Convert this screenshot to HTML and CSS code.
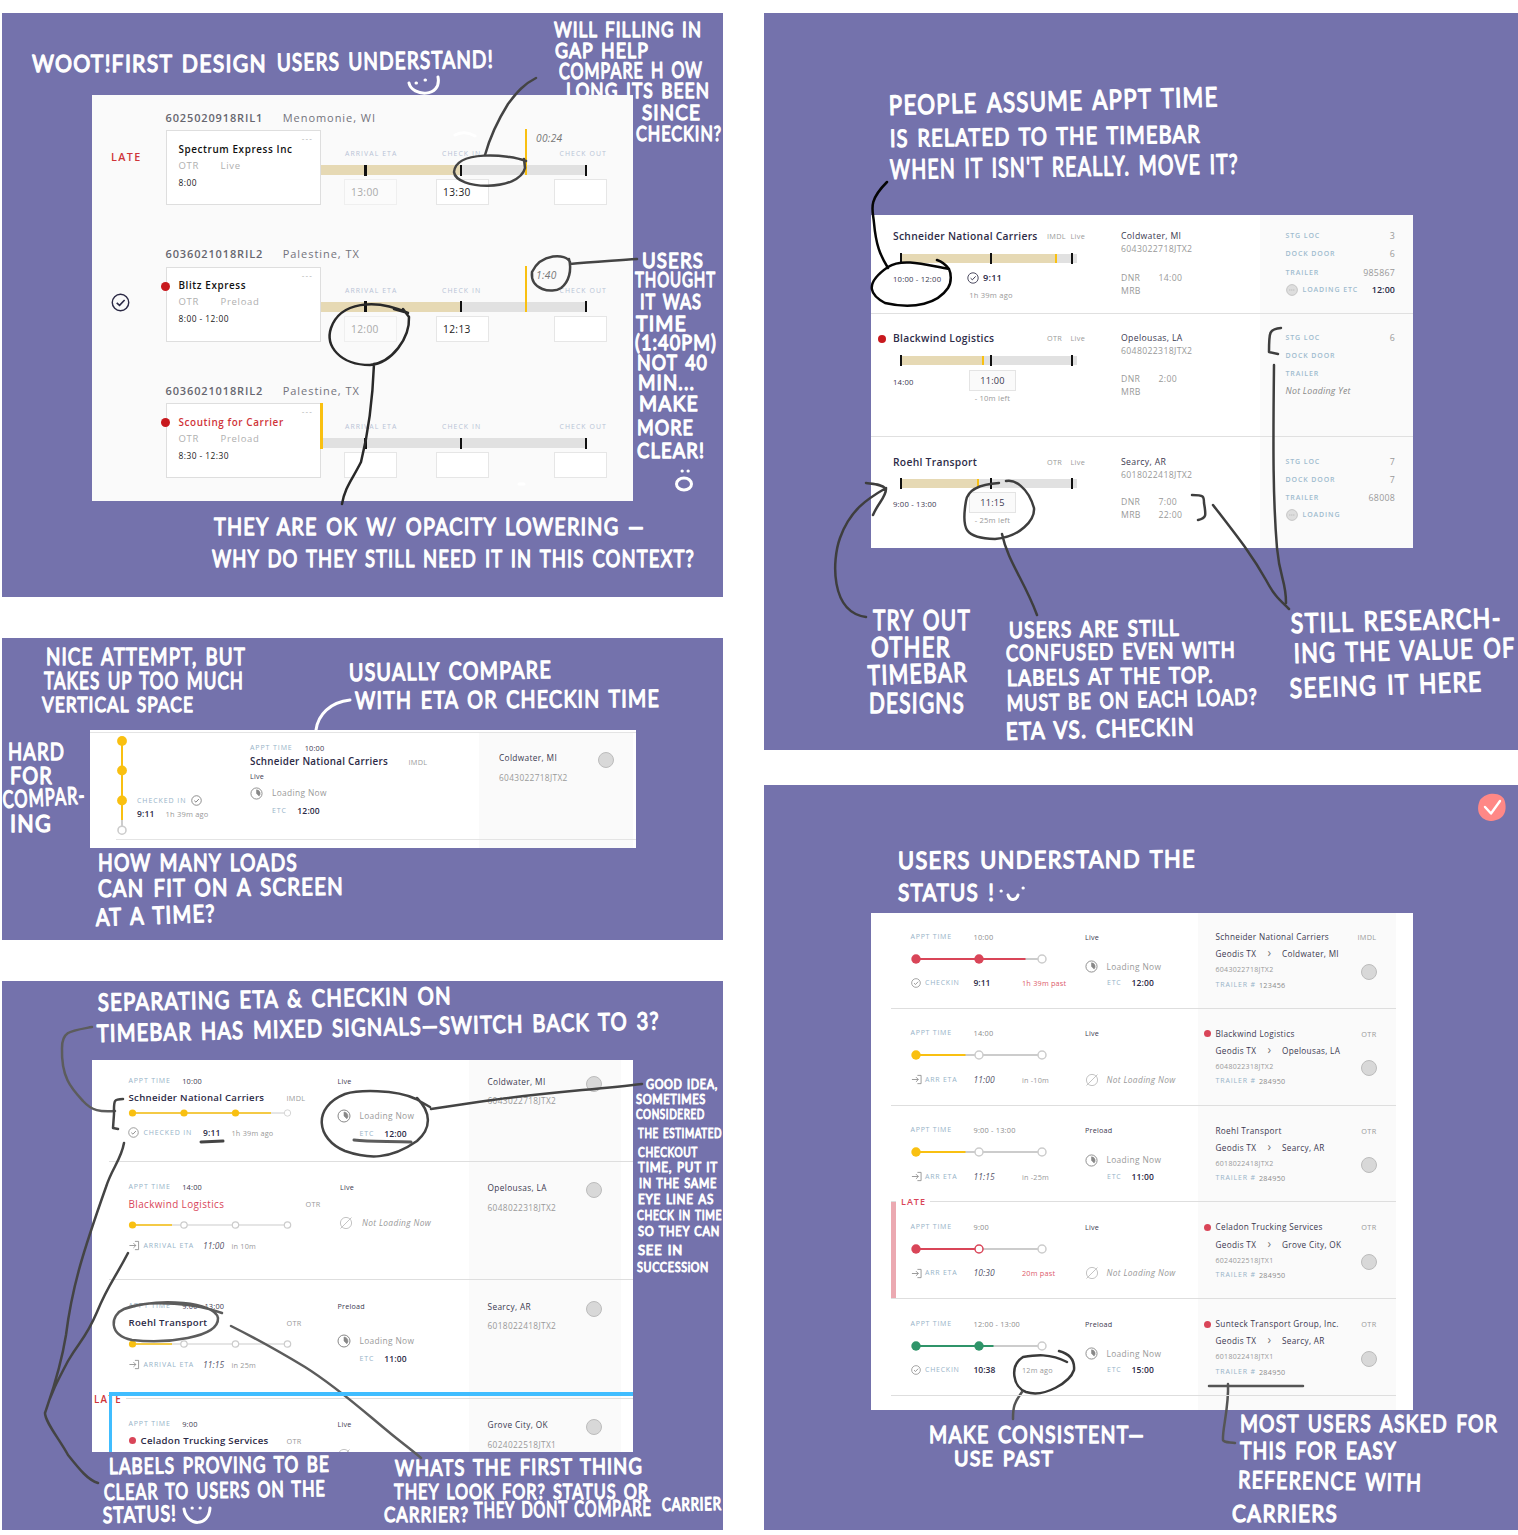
FILE: index.html
```html
<!DOCTYPE html>
<html lang="en">
<head>
<meta charset="utf-8">
<title>Load timeline iterations</title>
<link rel="stylesheet" href="styles.css">
</head>
<body>
<svg class="defs" width="0" height="0">
  <symbol id="check" viewBox="0 0 12 12"><circle cx="6" cy="6" r="5.2" fill="none" stroke="currentColor" stroke-width=".9"/><path d="M3.6 6.2 5.4 7.8 8.6 4.4" fill="none" stroke="currentColor" stroke-width="1"/></symbol>
  <symbol id="arrive" viewBox="0 0 12 12"><path d="M1 6H8M5.4 3.4 8 6 5.4 8.6M7 1.5H11V10.5H7" fill="none" stroke="currentColor" stroke-width=".9"/></symbol>
  <symbol id="pie" viewBox="0 0 14 14"><circle cx="7" cy="7" r="6" fill="none" stroke="#888" stroke-width="1"/><path d="M7 3V7L9.8 9.8A4 4 0 0 0 7 3Z" fill="#888" stroke="#888" stroke-width=".6"/></symbol>
  <symbol id="none" viewBox="0 0 14 14"><circle cx="7" cy="7" r="5.6" fill="none" stroke="#c4c4c4" stroke-width="1"/><path d="M1.5 12.5 12.5 1.5" stroke="#c4c4c4" stroke-width="1"/></symbol>
  <symbol id="dots" viewBox="0 0 12 12"><circle cx="6" cy="6" r="5.4" fill="#dedede" stroke="#bdbdbd" stroke-width=".8"/><path d="M3.2 6H8.8" stroke="#bbb" stroke-width="1" stroke-dasharray="1.2 .8"/></symbol>
</svg>
<main class="board">
<div class="col col-left">

<section class="panel p1">
  <svg class="ink" viewBox="2 13 721 584"><text class="h m" x="566" y="98" textLength="144" lengthAdjust="spacingAndGlyphs">LONG ITS BEEN</text></svg>
  <div class="card">
    <div class="load">
      <div class="flag late">LATE</div>
      <div class="body">
        <div class="head"><b>6025020918RIL1</b><span>Menomonie, WI</span></div>
        <div class="main">
          <div class="box"><i class="more">---</i><h3>Spectrum Express Inc</h3><p><span>OTR</span><span>Live</span></p><time>8:00</time></div>
          <div class="tl">
            <div class="stages names"><span>ARRIVAL ETA</span><span>CHECK IN</span><span>CHECK OUT</span></div>
            <div class="bar"><i class="fill"></i><i class="tick t1"></i><i class="tick t2"></i><i class="tick t3"></i></div>
            <div class="stages fields"><span class="dim">13:00</span><span>13:30</span><span></span></div>
            <i class="now"></i><em class="clock">00:24</em>
          </div>
        </div>
      </div>
    </div>
    <div class="load">
      <div class="flag"><svg width="19" height="19"><use href="#check"/></svg></div>
      <div class="body">
        <div class="head"><b>6036021018RIL2</b><span>Palestine, TX</span></div>
        <div class="main">
          <div class="box"><i class="dot"></i><i class="more">---</i><h3>Blitz Express</h3><p><span>OTR</span><span>Preload</span></p><time>8:00 - 12:00</time></div>
          <div class="tl">
            <div class="stages names"><span>ARRIVAL ETA</span><span>CHECK IN</span><span>CHECK OUT</span></div>
            <div class="bar"><i class="fill"></i><i class="tick t1"></i><i class="tick t2"></i><i class="tick t3"></i></div>
            <div class="stages fields"><span class="dim">12:00</span><span>12:13</span><span></span></div>
            <i class="now"></i><em class="clock">1:40</em>
          </div>
        </div>
      </div>
    </div>
    <div class="load">
      <div class="flag"></div>
      <div class="body">
        <div class="head"><b>6036021018RIL2</b><span>Palestine, TX</span></div>
        <div class="main">
          <div class="box"><i class="dot"></i><i class="more">---</i><h3 class="red">Scouting for Carrier</h3><p><span>OTR</span><span>Preload</span></p><time>8:30 - 12:30</time></div>
          <div class="tl">
            <div class="stages names"><span>ARRIVAL ETA</span><span>CHECK IN</span><span>CHECK OUT</span></div>
            <div class="bar"><i class="tick t1"></i><i class="tick t2"></i><i class="tick t3"></i></div>
            <div class="stages fields"><span></span><span></span><span></span></div>
            <i class="now start"></i>
          </div>
        </div>
      </div>
    </div>
  </div>
  <svg class="ink" viewBox="2 13 721 584">
    <text class="h" x="32" y="72" textLength="235" lengthAdjust="spacingAndGlyphs">WOOT!FIRST DESIGN</text>
    <text class="h" x="277" y="71" textLength="217" lengthAdjust="spacingAndGlyphs" transform="rotate(-.9 277 71)">USERS UNDERSTAND!</text>
    <text class="h m" x="554" y="37" textLength="148" lengthAdjust="spacingAndGlyphs">WILL FILLING IN</text>
    <text class="h m" x="555" y="58" textLength="94" lengthAdjust="spacingAndGlyphs">GAP HELP</text>
    <text class="h m" x="559" y="79" textLength="144" lengthAdjust="spacingAndGlyphs" transform="rotate(-.6 559 79)">COMPARE H OW</text>
    <text class="h m" x="642" y="120" textLength="59" lengthAdjust="spacingAndGlyphs">SINCE</text>
    <text class="h m" x="636" y="141" textLength="86" lengthAdjust="spacingAndGlyphs">CHECKIN?</text>
    <text class="h m" x="642" y="268" textLength="62" lengthAdjust="spacingAndGlyphs">USERS</text>
    <text class="h m" x="635" y="287" textLength="81" lengthAdjust="spacingAndGlyphs">THOUGHT</text>
    <text class="h m" x="640" y="309" textLength="62" lengthAdjust="spacingAndGlyphs">IT WAS</text>
    <text class="h m" x="636" y="331" textLength="51" lengthAdjust="spacingAndGlyphs">TIME</text>
    <text class="h m" x="635" y="350" textLength="82" lengthAdjust="spacingAndGlyphs">(1:40PM)</text>
    <text class="h m" x="637" y="370" textLength="71" lengthAdjust="spacingAndGlyphs">NOT 40</text>
    <text class="h m" x="638" y="390" textLength="57" lengthAdjust="spacingAndGlyphs">MIN...</text>
    <text class="h m" x="639" y="411" textLength="60" lengthAdjust="spacingAndGlyphs">MAKE</text>
    <text class="h m" x="637" y="435" textLength="57" lengthAdjust="spacingAndGlyphs">MORE</text>
    <text class="h m" x="637" y="458" textLength="68" lengthAdjust="spacingAndGlyphs">CLEAR!</text>
    <text class="h" x="214" y="535" textLength="431" lengthAdjust="spacingAndGlyphs">THEY ARE OK W/ OPACITY LOWERING —</text>
    <text class="h" x="212" y="567" textLength="483" lengthAdjust="spacingAndGlyphs">WHY DO THEY STILL NEED IT IN THIS CONTEXT?</text>
    <g class="w"><path d="M409 83C412 97 442 98 438 77M416 83h.5M425 80h.5M682 471h.3M688 471h.3"/><ellipse cx="684" cy="484" rx="7.5" ry="6"/><path d="M455 135Q465 130 475 136M519 484h5"/></g>
    <g class="k"><path d="M536 78C524 84 517 92 508 104C498 120 490 137 485 155"/><path d="M526 161C508 154 456 150 454 172C456 190 519 192 525 168L524 159"/><path d="M570 262C566 253 541 253 532 272C530 290 552 294 561 288C569 282 572 270 569 259M570 264C590 262 610 261 637 259"/></g>
    <g class="k" style="--ink:#292929"><path d="M394 309L408 313C375 298 340 302 331 328C325 346 340 365 370 365C392 363 410 338 409 317L403 309M374 364C373 390 369 430 361 462C352 480 345 487 342 504"/></g>
  </svg>
</section>

<section class="panel p2">
  <div class="card">
    <div class="steps"><svg width="12" height="106"><path d="M6 9V88" stroke="#f9c011" stroke-width="2"/><path d="M6 88V94" stroke="#ccc" stroke-width="2"/><g fill="#f9c011"><circle cx="6" cy="9" r="4.9"/><circle cx="6" cy="38.500" r="4.900"/><circle cx="6" cy="68.500" r="4.900"/></g><circle cx="6" cy="98.200" r="4" fill="#fff" stroke="#ccc" stroke-width="1.600"/></svg></div>
    <div class="checked"><p><span class="lbl">CHECKED IN</span><svg width="11" height="11"><use href="#check"/></svg></p><p><b>9:11</b><small>1h 39m ago</small></p></div>
    <div class="info">
      <p class="c2"><span class="lbl">APPT TIME</span><span class="tm">10:00</span></p>
      <p class="ttl"><b>Schneider National Carriers</b><small>IMDL</small></p>
      <p class="kind">Live</p>
      <p class="ld"><svg width="13" height="13"><use href="#pie"/></svg><span>Loading Now</span></p>
      <p class="etc"><span class="lbl">ETC</span><b>12:00</b></p>
    </div>
    <div class="side"><div><p>Coldwater, MI</p><p class="id">6043022718JTX2</p></div><i class="disc"></i></div>
  </div>
  <svg class="ink" viewBox="2 638 721 302">
    <text class="h" x="46" y="665" textLength="200" lengthAdjust="spacingAndGlyphs">NICE ATTEMPT, BUT</text>
    <text class="h" x="44" y="689" textLength="200" lengthAdjust="spacingAndGlyphs">TAKES UP TOO MUCH</text>
    <text class="h m" x="42" y="712" textLength="152" lengthAdjust="spacingAndGlyphs">VERTICAL SPACE</text>
    <text class="h" x="8" y="760" textLength="57" lengthAdjust="spacingAndGlyphs">HARD</text>
    <text class="h" x="10" y="784" textLength="43" lengthAdjust="spacingAndGlyphs">FOR</text>
    <text class="h" x="3" y="808" textLength="83" lengthAdjust="spacingAndGlyphs" transform="rotate(-3 3 808)">COMPAR-</text>
    <text class="h" x="10" y="832" textLength="42" lengthAdjust="spacingAndGlyphs">ING</text>
    <text class="h" x="98" y="871" textLength="200" lengthAdjust="spacingAndGlyphs">HOW MANY LOADS</text>
    <text class="h" x="98" y="897" textLength="246" lengthAdjust="spacingAndGlyphs" transform="rotate(-.5 98 897)">CAN FIT ON A SCREEN</text>
    <text class="h" x="96" y="926" textLength="120" lengthAdjust="spacingAndGlyphs" transform="rotate(-2 96 926)">AT A TIME?</text>
    <text class="h" x="349" y="681" textLength="203" lengthAdjust="spacingAndGlyphs" transform="rotate(-.8 349 681)">USUALLY COMPARE</text>
    <text class="h" x="355" y="709" textLength="305" lengthAdjust="spacingAndGlyphs" transform="rotate(-.4 355 709)">WITH ETA OR CHECKIN TIME</text>
    <path class="w" d="M350 700C330 702 318 715 316 730"/>
  </svg>
</section>

<section class="panel p3">
  <div class="card">
    <div class="row tight">
      <div class="c-main">
        <p class="ap"><span class="lbl">APPT TIME</span><span class="tm">10:00</span></p>
        <p class="ttl"><b>Schneider National Carriers</b><small>IMDL</small></p>
        <svg class="line" width="170" height="10"><path d="M5 5H160" stroke="#ccc"/><path d="M5 5H143" stroke="#f9c011" stroke-width="1.6"/><g fill="#f9c011"><circle cx="4.5" cy="5" r="3.6"/><circle cx="56" cy="5" r="3.6"/><circle cx="107.5" cy="5" r="3.6"/></g><circle cx="159.500" cy="5" r="3.2" fill="#fff" stroke="#d6d6d6"/></svg>
        <p class="st"><svg width="11" height="11"><use href="#check"/></svg><span class="lbl">CHECKED IN</span><b>9:11</b><small>1h 39m ago</small></p>
      </div>
      <div class="c-load"><p class="kind">Live</p><p class="ld"><svg width="14" height="14"><use href="#pie"/></svg><span>Loading Now</span></p><p class="etc"><span class="lbl">ETC</span><b>12:00</b></p></div>
      <div class="side"><div><p>Coldwater, MI</p><p class="id">6043022718JTX2</p></div><i class="disc"></i></div>
    </div>
    <div class="row second">
      <div class="c-main">
        <p class="ap"><span class="lbl">APPT TIME</span><span class="tm">14:00</span></p>
        <p class="ttl far"><b class="pink">Blackwind Logistics</b><small>OTR</small></p>
        <svg class="line" width="170" height="10"><path d="M5 5H160" stroke="#ccc" stroke-width="1.2"/><path d="M5 5H44" stroke="#f9c011" stroke-width="1.4"/><circle cx="4.500" cy="5" r="3.600" fill="#f9c011"/><g fill="#fff" stroke="#ccc" stroke-width="1.2"><circle cx="56" cy="5" r="3.2"/><circle cx="107.500" cy="5" r="3.2"/><circle cx="159.500" cy="5" r="3.2"/></g></svg>
        <p class="st"><svg width="12" height="11"><use href="#arrive"/></svg><span class="lbl">ARRIVAL ETA</span><em>11:00</em><small>in 10m</small></p>
      </div>
      <div class="c-load shift"><p class="kind">Live</p><p class="ld no"><svg width="14" height="14"><use href="#none"/></svg><em>Not Loading Now</em></p></div>
      <div class="side"><div><p>Opelousas, LA</p><p class="id">6048022318JTX2</p></div><i class="disc"></i></div>
    </div>
    <div class="row">
      <div class="c-main">
        <p class="ap"><span class="lbl">APPT TIME</span><span class="tm">9:00 - 13:00</span></p>
        <p class="ttl"><b>Roehl Transport</b><small>OTR</small></p>
        <svg class="line" width="170" height="10"><path d="M5 5H160" stroke="#ccc" stroke-width="1.2"/><path d="M5 5H44" stroke="#f9c011" stroke-width="1.4"/><circle cx="4.500" cy="5" r="3.600" fill="#f9c011"/><g fill="#fff" stroke="#ccc" stroke-width="1.2"><circle cx="56" cy="5" r="3.2"/><circle cx="107.500" cy="5" r="3.2"/><circle cx="159.500" cy="5" r="3.2"/></g></svg>
        <p class="st"><svg width="12" height="11"><use href="#arrive"/></svg><span class="lbl">ARRIVAL ETA</span><em>11:15</em><small>in 25m</small></p>
      </div>
      <div class="c-load"><p class="kind">Preload</p><p class="ld"><svg width="14" height="14"><use href="#pie"/></svg><span>Loading Now</span></p><p class="etc"><span class="lbl">ETC</span><b>11:00</b></p></div>
      <div class="side"><div><p>Searcy, AR</p><p class="id">6018022418JTX2</p></div><i class="disc"></i></div>
    </div>
    <div class="row last">
      <span class="late">LATE</span>
      <div class="c-main">
        <p class="ap"><span class="lbl">APPT TIME</span><span class="tm">9:00</span></p>
        <p class="ttl"><b class="dotted">Celadon Trucking Services</b><small>OTR</small></p>
      </div>
      <div class="c-load"><p class="kind">Live</p><p class="ld no low"><svg width="14" height="14"><use href="#none"/></svg></p></div>
      <div class="side"><div><p>Grove City, OK</p><p class="id">6024022518JTX1</p></div><i class="disc"></i></div>
      <i class="frame"></i>
    </div>
  </div>
  <svg class="ink" viewBox="2 981 721 549">
    <text class="h" x="98" y="1011" textLength="354" lengthAdjust="spacingAndGlyphs" transform="rotate(-1.1 98 1011)">SEPARATING ETA &amp; CHECKIN ON</text>
    <text class="h" x="97" y="1042" textLength="563" lengthAdjust="spacingAndGlyphs" transform="rotate(-1.3 97 1042)">TIMEBAR HAS MIXED SIGNALS—SWITCH BACK TO 3?</text>
    <g class="h s"><text x="646" y="1089" textLength="72" lengthAdjust="spacingAndGlyphs">GOOD IDEA,</text>
    <text x="636" y="1104" textLength="70" lengthAdjust="spacingAndGlyphs">SOMETIMES</text>
    <text x="636" y="1119" textLength="69" lengthAdjust="spacingAndGlyphs">CONSIDERED</text>
    <text x="638" y="1138" textLength="84" lengthAdjust="spacingAndGlyphs">THE ESTIMATED</text>
    <text x="638" y="1157" textLength="60" lengthAdjust="spacingAndGlyphs">CHECKOUT</text>
    <text x="638" y="1172" textLength="80" lengthAdjust="spacingAndGlyphs">TIME, PUT IT</text>
    <text x="639" y="1188" textLength="78" lengthAdjust="spacingAndGlyphs">IN THE SAME</text>
    <text x="638" y="1204" textLength="76" lengthAdjust="spacingAndGlyphs">EYE LINE AS</text>
    <text x="637" y="1220" textLength="85" lengthAdjust="spacingAndGlyphs">CHECK IN TIME</text>
    <text x="638" y="1236" textLength="82" lengthAdjust="spacingAndGlyphs">SO THEY CAN</text>
    <text x="638" y="1255" textLength="45" lengthAdjust="spacingAndGlyphs">SEE IN</text>
    <text x="637" y="1272" textLength="72" lengthAdjust="spacingAndGlyphs">SUCCESSiON</text></g>
    <text class="h m" x="109" y="1474" textLength="221" lengthAdjust="spacingAndGlyphs" transform="rotate(-.6 109 1474)">LABELS PROVING TO BE</text>
    <text class="h m" x="104" y="1500" textLength="222" lengthAdjust="spacingAndGlyphs" transform="rotate(-1 104 1500)">CLEAR TO USERS ON THE</text>
    <text class="h m" x="103" y="1523" textLength="74" lengthAdjust="spacingAndGlyphs" transform="rotate(-1.500 103 1523)">STATUS!</text>
    <text class="h m" x="395" y="1476" textLength="248" lengthAdjust="spacingAndGlyphs" transform="rotate(-.5 395 1476)">WHATS THE FIRST THING</text>
    <text class="h m" x="394" y="1499" textLength="255" lengthAdjust="spacingAndGlyphs">THEY LOOK FOR? STATUS OR</text>
    <text class="h m" x="384" y="1522" textLength="85" lengthAdjust="spacingAndGlyphs">CARRIER?</text>
    <text class="h m" x="474" y="1518" textLength="178" lengthAdjust="spacingAndGlyphs" transform="rotate(-.8 474 1518)">THEY DONT COMPARE</text>
    <text class="h c" x="662" y="1511" textLength="60" lengthAdjust="spacingAndGlyphs" transform="rotate(-1 662 1511)">CARRIER</text>
    <g class="w"><path d="M184 1509C187 1527 209 1527 210 1508M192 1508h.3M200 1508h.3"/></g>
    <g class="k" style="--ink:#5c5c5c"><path d="M92 1027C70 1031 62 1031 62 1048C61 1078 72 1089 83 1101C92 1111 100 1112 115 1111"/><path d="M124 1309C160 1297 215 1302 218 1318C219 1338 165 1344 132 1340C108 1335 110 1315 124 1309C150 1298 200 1305 222 1313"/><path d="M231 1326C255 1338 285 1355 305 1367C340 1389 370 1417 390 1433C402 1443 412 1450 421 1458"/><path class="thick" d="M354 1140C370 1142 390 1141 411 1142"/></g>
    <g class="k"><path d="M123 1099C113 1099 114 1101 114 1114L113 1128L118 1129M124 1143C121 1160 112 1168 106 1187C83 1252 72 1287 66 1335C60 1372 50 1398 45 1413M128 1253C114 1280 108 1285 97 1312C85 1340 80 1340 68 1361C58 1380 50 1395 45 1413C45 1422 60 1440 68 1455C80 1470 88 1480 98 1483"/><path d="M430 1107L416 1099C395 1089 358 1090 345 1094C312 1107 316 1139 345 1151C368 1159 390 1160 417 1141C432 1128 431 1112 417 1098M431 1109L478 1102C530 1094 590 1090 642 1084"/><path class="thick" d="M201 1142L223 1141"/></g>
  </svg>
</section>
</div>

<div class="col col-right">
<section class="panel p4">
  <div class="card">
    <div class="row r1">
      <div class="c-main">
        <p class="ttl"><b>Schneider National Carriers</b><small>IMDL</small><small>Live</small></p>
        <div class="bar"><i class="fill" style="width:156px"></i><i class="tick t1"></i><i class="tick t2"></i><i class="tick t3"></i><i class="now" style="left:155px"></i></div>
        <div class="times"><span>10:00 - 12:00</span><div class="eta"><p><svg width="12" height="12"><use href="#check"/></svg><b>9:11</b></p><small>1h 39m ago</small></div></div>
      </div>
      <div class="place"><p>Coldwater, MI</p><p class="id">6043022718JTX2</p><p class="pair up"><span>DNR</span><span>14:00</span></p><p class="pair"><span>MRB</span></p></div>
      <div class="dock"><p><span>STG LOC</span><i>3</i></p><p><span>DOCK DOOR</span><i>6</i></p><p><span>TRAILER</span><i>985867</i></p><p class="go"><svg width="12" height="12"><use href="#dots"/></svg><span>LOADING ETC</span><b>12:00</b></p></div>
    </div>
    <div class="row r2">
      <i class="dot"></i>
      <div class="c-main">
        <p class="ttl"><b>Blackwind Logistics</b><small>OTR</small><small>Live</small></p>
        <div class="bar"><i class="fill" style="width:83px"></i><i class="tick t1"></i><i class="tick t2"></i><i class="tick t3"></i><i class="now" style="left:82px"></i></div>
        <div class="times"><span>14:00</span><div class="eta"><span class="field">11:00</span><small>- 10m left</small></div></div>
      </div>
      <div class="place"><p>Opelousas, LA</p><p class="id">6048022318JTX2</p><p class="pair up"><span>DNR</span><span>2:00</span></p><p class="pair"><span>MRB</span></p></div>
      <div class="dock"><p><span>STG LOC</span><i>6</i></p><p><span>DOCK DOOR</span></p><p><span>TRAILER</span></p><p class="go"><em>Not Loading Yet</em></p></div>
    </div>
    <div class="row r3">
      <div class="c-main">
        <p class="ttl"><b>Roehl Transport</b><small>OTR</small><small>Live</small></p>
        <div class="bar"><i class="fill" style="width:78px"></i><i class="tick t1"></i><i class="tick t2"></i><i class="tick t3"></i><i class="now" style="left:77px"></i></div>
        <div class="times"><span>9:00 - 13:00</span><div class="eta"><span class="field">11:15</span><small>- 25m left</small></div></div>
      </div>
      <div class="place"><p>Searcy, AR</p><p class="id">6018022418JTX2</p><p class="pair up"><span>DNR</span><span>7:00</span></p><p class="pair"><span>MRB</span><span>22:00</span></p></div>
      <div class="dock"><p><span>STG LOC</span><i>7</i></p><p><span>DOCK DOOR</span><i>7</i></p><p><span>TRAILER</span><i>68008</i></p><p class="go"><svg width="12" height="12"><use href="#dots"/></svg><span>LOADING</span></p></div>
    </div>
  </div>
  <svg class="ink" viewBox="764 13 754 737">
    <text class="h l" x="889" y="115" textLength="330" lengthAdjust="spacingAndGlyphs" transform="rotate(-1.500 889 115)">PEOPLE ASSUME APPT TIME</text>
    <text class="h" x="890" y="147" textLength="311" lengthAdjust="spacingAndGlyphs" transform="rotate(-.8 890 147)">IS RELATED TO THE TIMEBAR</text>
    <text class="h l" x="890" y="179" textLength="349" lengthAdjust="spacingAndGlyphs" transform="rotate(-.9 890 179)">WHEN IT ISN'T REALLY. MOVE IT?</text>
    <text class="h l" x="873" y="630" textLength="98" lengthAdjust="spacingAndGlyphs">TRY OUT</text>
    <text class="h l" x="871" y="657" textLength="80" lengthAdjust="spacingAndGlyphs">OTHER</text>
    <text class="h l" x="868" y="685" textLength="100" lengthAdjust="spacingAndGlyphs" transform="rotate(-2 868 685)">TIMEBAR</text>
    <text class="h l" x="869" y="713" textLength="96" lengthAdjust="spacingAndGlyphs">DESIGNS</text>
    <text class="h m" x="1009" y="638" textLength="171" lengthAdjust="spacingAndGlyphs" transform="rotate(-.8 1009 638)">USERS ARE STILL</text>
    <text class="h m" x="1006" y="661" textLength="230" lengthAdjust="spacingAndGlyphs" transform="rotate(-.9 1006 661)">CONFUSED EVEN WITH</text>
    <text class="h m" x="1007" y="686" textLength="207" lengthAdjust="spacingAndGlyphs" transform="rotate(-1 1007 686)">LABELS AT THE TOP.</text>
    <text class="h m" x="1007" y="711" textLength="251" lengthAdjust="spacingAndGlyphs" transform="rotate(-1.500 1007 711)">MUST BE ON EACH LOAD?</text>
    <text class="h" x="1006" y="740" textLength="189" lengthAdjust="spacingAndGlyphs" transform="rotate(-1.500 1006 740)">ETA VS. CHECKIN</text>
    <text class="h l" x="1291" y="633" textLength="211" lengthAdjust="spacingAndGlyphs" transform="rotate(-1.500 1291 633)">STILL RESEARCH-</text>
    <text class="h l" x="1294" y="663" textLength="222" lengthAdjust="spacingAndGlyphs" transform="rotate(-1.500 1294 663)">ING THE VALUE OF</text>
    <text class="h l" x="1290" y="698" textLength="193" lengthAdjust="spacingAndGlyphs" transform="rotate(-2 1290 698)">SEEING IT HERE</text>
    <g class="k" style="--ink:#050505"><path d="M887 182C867 202 873 210 874 223C876 245 880 255 888 268M937 260C943 262 946 265 949 269C930 266 903 257 888 267C862 285 872 296 885 303C915 310 938 303 948 288C952 282 951 273 949 269"/></g>
    <g class="k" style="--ink:#3e3e3e"><path d="M866 617C830 612 832 560 840 538C850 510 867 499 886 488M866 483C874 484 882 484 886 489C886 497 878 503 873 515M999 483C983 484 968 488 966 501C961 530 965 538 995 539C1020 537 1035 520 1034 508C1028 487 1014 479 1006 481M1002 534C1008 562 1024 580 1037 615"/><path d="M1192 495C1204 495 1204 496 1204 503C1206 515 1207 518 1198 520M1213 505C1240 540 1252 555 1266 580C1275 597 1280 600 1289 609M1281 328C1269 329 1269 332 1269 352L1278 354M1274 365C1273 450 1273 500 1277 548C1280 580 1286 580 1286 603"/></g>
  </svg>
</section>

<section class="panel p5">
  <div class="card">
    <div class="row">
      <div class="c-main">
        <p class="ap"><span class="lbl">APPT TIME</span><span class="tm">10:00</span></p>
        <svg class="line" width="140" height="10"><path d="M5 5H130" stroke="#ccc" stroke-width="2"/><path d="M5 5H114.500" stroke="#d94558" stroke-width="2"/><g fill="#d94558"><circle cx="5" cy="5" r="4.700"/><circle cx="68" cy="5" r="4.700"/></g><circle cx="131" cy="5" r="4" fill="#fff" stroke="#ccc" stroke-width="1.500"/></svg>
        <p class="st"><svg width="10" height="10"><use href="#check"/></svg><span class="lbl">CHECKIN</span><b>9:11</b><small class="pink">1h 39m past</small></p>
      </div>
      <div class="c-load"><p class="kind">Live</p><p class="ld"><svg width="13" height="13"><use href="#pie"/></svg><span>Loading Now</span></p><p class="etc"><span class="lbl">ETC</span><b>12:00</b></p></div>
      <div class="side"><p class="nm"><span>Schneider National Carriers</span><small>IMDL</small></p><p class="rt"><span>Geodis TX</span><u>›</u><span>Coldwater, MI</span></p><p class="id">6043022718JTX2</p><p class="tr"><span class="lbl">TRAILER #</span>123456</p><i class="disc"></i></div>
    </div>
    <div class="row">
      <div class="c-main">
        <p class="ap"><span class="lbl">APPT TIME</span><span class="tm">14:00</span></p>
        <svg class="line" width="140" height="10"><path d="M5 5H130" stroke="#ccc" stroke-width="2"/><path d="M5 5H54.500" stroke="#f9c011" stroke-width="2"/><circle cx="5" cy="5" r="4.700" fill="#f9c011"/><g fill="#fff" stroke="#ccc" stroke-width="1.500"><circle cx="68" cy="5" r="4"/><circle cx="131" cy="5" r="4"/></g></svg>
        <p class="st"><svg width="11" height="11"><use href="#arrive"/></svg><span class="lbl">ARR ETA</span><em>11:00</em><small>in -10m</small></p>
      </div>
      <div class="c-load"><p class="kind">Live</p><p class="ld no"><svg width="14" height="14"><use href="#none"/></svg><em>Not Loading Now</em></p></div>
      <div class="side"><i class="dot"></i><p class="nm"><span>Blackwind Logistics</span><small>OTR</small></p><p class="rt"><span>Geodis TX</span><u>›</u><span>Opelousas, LA</span></p><p class="id">6048022318JTX2</p><p class="tr"><span class="lbl">TRAILER #</span>284950</p><i class="disc"></i></div>
    </div>
    <div class="row">
      <div class="c-main">
        <p class="ap"><span class="lbl">APPT TIME</span><span class="tm">9:00 - 13:00</span></p>
        <svg class="line" width="140" height="10"><path d="M5 5H130" stroke="#ccc" stroke-width="2"/><path d="M5 5H54.500" stroke="#f9c011" stroke-width="2"/><circle cx="5" cy="5" r="4.700" fill="#f9c011"/><g fill="#fff" stroke="#ccc" stroke-width="1.500"><circle cx="68" cy="5" r="4"/><circle cx="131" cy="5" r="4"/></g></svg>
        <p class="st"><svg width="11" height="11"><use href="#arrive"/></svg><span class="lbl">ARR ETA</span><em>11:15</em><small>in -25m</small></p>
      </div>
      <div class="c-load"><p class="kind">Preload</p><p class="ld"><svg width="13" height="13"><use href="#pie"/></svg><span>Loading Now</span></p><p class="etc"><span class="lbl">ETC</span><b>11:00</b></p></div>
      <div class="side"><p class="nm"><span>Roehl Transport</span><small>OTR</small></p><p class="rt"><span>Geodis TX</span><u>›</u><span>Searcy, AR</span></p><p class="id">6018022418JTX2</p><p class="tr"><span class="lbl">TRAILER #</span>284950</p><i class="disc"></i></div>
    </div>
    <div class="row is-late">
      <span class="late">LATE</span>
      <div class="c-main">
        <p class="ap"><span class="lbl">APPT TIME</span><span class="tm">9:00</span></p>
        <svg class="line" width="140" height="10"><path d="M5 5H130" stroke="#ccc" stroke-width="2"/><path d="M5 5H68" stroke="#d94558" stroke-width="2"/><circle cx="5" cy="5" r="4.700" fill="#d94558"/><circle cx="68" cy="5" r="4" fill="#fff" stroke="#d94558" stroke-width="1.500"/><circle cx="131" cy="5" r="4" fill="#fff" stroke="#ccc" stroke-width="1.500"/></svg>
        <p class="st"><svg width="11" height="11"><use href="#arrive"/></svg><span class="lbl">ARR ETA</span><em>10:30</em><small class="pink">20m past</small></p>
      </div>
      <div class="c-load"><p class="kind">Live</p><p class="ld no"><svg width="14" height="14"><use href="#none"/></svg><em>Not Loading Now</em></p></div>
      <div class="side"><i class="dot"></i><p class="nm"><span>Celadon Trucking Services</span><small>OTR</small></p><p class="rt"><span>Geodis TX</span><u>›</u><span>Grove City, OK</span></p><p class="id">6024022518JTX1</p><p class="tr"><span class="lbl">TRAILER #</span>284950</p><i class="disc"></i></div>
    </div>
    <div class="row">
      <div class="c-main">
        <p class="ap"><span class="lbl">APPT TIME</span><span class="tm">12:00 - 13:00</span></p>
        <svg class="line" width="140" height="10"><path d="M5 5H130" stroke="#ccc" stroke-width="2"/><path d="M5 5H82.500" stroke="#2f9469" stroke-width="2"/><g fill="#2f9469"><circle cx="5" cy="5" r="4.700"/><circle cx="68" cy="5" r="4.700"/></g><circle cx="131" cy="5" r="4" fill="#fff" stroke="#ccc" stroke-width="1.500"/></svg>
        <p class="st"><svg width="10" height="10"><use href="#check"/></svg><span class="lbl">CHECKIN</span><b>10:38</b><small>12m ago</small></p>
      </div>
      <div class="c-load"><p class="kind">Preload</p><p class="ld"><svg width="13" height="13"><use href="#pie"/></svg><span>Loading Now</span></p><p class="etc"><span class="lbl">ETC</span><b>15:00</b></p></div>
      <div class="side"><i class="dot"></i><p class="nm"><span>Sunteck Transport Group, Inc.</span><small>OTR</small></p><p class="rt"><span>Geodis TX</span><u>›</u><span>Searcy, AR</span></p><p class="id">6018022418JTX1</p><p class="tr"><span class="lbl">TRAILER #</span>284950</p><i class="disc"></i></div>
    </div>
    <div class="row end"><div></div><div></div><div class="side"></div></div>
  </div>
  <svg class="ink" viewBox="764 785 754 745">
    <text class="h" x="898" y="869" textLength="298" lengthAdjust="spacingAndGlyphs" transform="rotate(-.3 898 869)">USERS UNDERSTAND THE</text>
    <text class="h" x="898" y="901" textLength="97" lengthAdjust="spacingAndGlyphs">STATUS !</text>
    <text class="h" x="929" y="1443" textLength="216" lengthAdjust="spacingAndGlyphs">MAKE CONSISTENT—</text>
    <text class="h m" x="954" y="1466" textLength="100" lengthAdjust="spacingAndGlyphs">USE PAST</text>
    <text class="h" x="1240" y="1432" textLength="258" lengthAdjust="spacingAndGlyphs">MOST USERS ASKED FOR</text>
    <text class="h" x="1240" y="1459" textLength="157" lengthAdjust="spacingAndGlyphs">THIS FOR EASY</text>
    <text class="h" x="1238" y="1488" textLength="184" lengthAdjust="spacingAndGlyphs" transform="rotate(1 1238 1488)">REFERENCE WITH</text>
    <text class="h" x="1232" y="1522" textLength="106" lengthAdjust="spacingAndGlyphs">CARRIERS</text>
    <path d="M1480 800C1488 790 1504 793 1505 802C1508 815 1500 821 1490 821C1478 819 1476 809 1480 800Z" fill="#ff8886"/>
    <path class="w thin" d="M1485 807L1491 813.500L1500 801"/>
    <path class="w" d="M1001 891h.3M1023 888h.3M1008 895C1010 902 1017 900 1018 895"/>
    <g class="k" style="--ink:#3a3a3a"><path d="M1067 1362C1050 1353 1035 1355 1023 1357C1009 1366 1013 1387 1026 1392C1045 1398 1070 1382 1074 1370C1075 1360 1070 1354 1059 1351"/></g>
    <g class="k" style="--ink:#555"><path d="M1022 1392C1014 1403 1013 1407 1013 1419M1209 1386H1303"/><path d="M1228 1384C1229 1408 1222 1430 1223 1440C1224 1443 1230 1442 1235 1443"/></g>
  </svg>
</section>
</div>
</main>
</body>
</html>
```
FILE: styles.css
```css
* { box-sizing: border-box; }
body {
  margin: 0;
  width: 1518px;
  height: 1535px;
  overflow: hidden;
  background: #fff;
  font-family: "Open Sans", "Noto Sans", sans-serif;
  color: #3b3950;
}
p, h3 { margin: 0; font-weight: 400; }
b, h3 { font-weight: 600; }
i { font-style: normal; }
.defs { position: absolute; }
svg { display: block; }

.board { display: flex; gap: 41px; padding: 13px 0 0 2px; }
.col { display: flex; flex-direction: column; }
.col-left { width: 721px; gap: 41px; }
.col-right { width: 754px; gap: 35px; }
.panel { position: relative; overflow: hidden; background: #7472ac; }
.p1 { height: 584px; padding: 82px 0 0 90px; }
.p2 { height: 302px; padding: 92px 0 0 88px; }
.p3 { height: 549px; padding: 79px 0 0 90px; }
.p4 { height: 737px; padding: 202px 0 0 107px; }
.p5 { height: 745px; padding: 128px 0 0 107px; }
.card { position: relative; background: #fff; white-space: nowrap; overflow: hidden; }

/* Handwritten notes and pen marks */
.ink { position: absolute; inset: 0; width: 100%; height: 100%; }
.h {
  font: 400 24px Lato, sans-serif;
  letter-spacing: .06em;
  word-spacing: .12em;
  fill: #fff;
  stroke: #fff;
  stroke-width: 1.3;
  stroke-linejoin: round;
}
.h.m { font-size: 22px; }
.h.c { font-size: 18px; }
.h.l { font-size: 27px; }
.h.s { font-size: 13px; stroke-width: 1; word-spacing: .1em; }
.w { fill: none; stroke: #fff; stroke-width: 3; stroke-linecap: round; stroke-linejoin: round; }
.w.thin { stroke-width: 2.4; }
.k { --ink: #444; fill: none; stroke: var(--ink); stroke-width: 2.5; stroke-linecap: round; stroke-linejoin: round; }
.k .thick { stroke-width: 3; }

/* Shared bits */
.lbl { color: #97b3c8; font-size: 7px; font-weight: 500; letter-spacing: .9px; }
small { color: #999; }
.pink { color: #d94558; }
.disc { width: 16px; height: 16px; border-radius: 50%; background: #d8d8d8; border: 1px solid #bcbcbc; }
.late { color: #cf3439; font-weight: 600; }

/* Panel 1 */
.p1 .card { width: 541px; height: 406px; padding-top: 15px; background: #fafafa; }
.load { display: flex; height: 136.600px; }
.flag { width: 73.500px; padding: 39px 0 0 19px; font-size: 10.800px; line-height: 15px; letter-spacing: 1.400px; }
.flag svg { margin-top: 7px; color: #2b2945; }
.head { display: flex; gap: 19.500px; height: 20px; font-size: 11px; line-height: 15px; letter-spacing: .87px; color: #66666f; }
.load + .load .head { position: relative; top: -.600px; }
.head span { letter-spacing: .95px; color: #73737c; }
.main { display: flex; }
.box { position: relative; width: 155.500px; height: 75px; padding: 9.500px 0 0 12px; background: #fff; border: 1.500px solid #dedede; }
.box h3 { font-size: 9.900px; line-height: 16px; letter-spacing: .6px; color: #111; }
.box .red { color: #cf3439; }
.box p { display: grid; grid-template-columns: 42px auto; font-size: 9.500px; line-height: 17px; letter-spacing: .7px; color: #b0b0b0; }
.box time { display: block; font-size: 8.400px; line-height: 17px; letter-spacing: .45px; color: #222; }
.more { position: absolute; right: 7px; top: 1px; font-size: 8px; letter-spacing: 1.200px; color: #aaa; }
.dot { position: absolute; width: 8px; height: 8px; border-radius: 50%; background: #c8191e; }
.box .dot { left: -6px; top: 14px; width: 9px; height: 9px; }
.tl { position: relative; width: 290px; padding-top: 17px; }
.stages { display: flex; }
.stages span { width: 53px; margin-left: 23px; }
.stages span:nth-child(2) { margin-left: 39px; }
.stages span:nth-child(3) { margin-left: 64.500px; }
.names { height: 18px; font-size: 6.900px; line-height: 13px; letter-spacing: 1.070px; color: #b8c3d6; }
.names span { padding-left: 1px; }
.names span + span { padding-left: 6px; }
.tl .bar { position: relative; width: 265.500px; height: 10px; background: #e1e1e1; }
.fill { position: absolute; left: 0; top: 0; height: 100%; background: #e6d9b4; }
.tl .fill { width: 139px; }
.tick { position: absolute; width: 2.500px; height: 100%; background: #111; }
.tl .tick { top: -.5px; height: 11px; }
.tl .t1 { left: 43px; }
.tl .t2 { left: 138.500px; }
.tl .t3 { left: 263.500px; }
.fields { padding-top: 4px; }
.fields span { height: 26px; padding-left: 6px; background: #fff; border: 1px solid #e6e6e6; font-size: 10.200px; line-height: 24px; letter-spacing: .35px; color: #222; }
.fields .dim { color: #aaa; background: #fbfbfb; border-color: #efefef; }
.now { position: absolute; width: 2px; background: #f9c011; }
.tl .now { left: 204px; top: -1px; height: 46px; }
.tl .now.start { left: -1px; top: 0; width: 2.500px; }
.clock { position: absolute; left: 215px; top: 0; font-size: 10.200px; line-height: 16px; letter-spacing: .3px; color: #777; }

/* Panel 2 */
.p2 .card { display: flex; width: 546px; height: 118px; padding-top: 2px; }
.p2 .card::before { content: ""; position: absolute; left: 0; right: 0; top: 2px; height: 1px; background: #e4e4e4; }
.p2 .card::after { content: ""; position: absolute; left: 26px; right: 0; top: 109px; height: 1px; background: #e4e4e4; }
.steps { width: 47px; padding-left: 25.500px; }
.p2 p { display: flex; height: 12px; line-height: 12px; align-items: center; }
.checked { width: 113px; padding-top: 62.500px; }
.checked p { gap: 5px; }
.checked p + p { gap: 11px; margin-top: 1.500px; }
.checked svg { color: #777; }
.checked .lbl { letter-spacing: .92px; }
.p2 b { font-size: 8.500px; letter-spacing: .15px; color: #2b2945; }
.checked small { font-size: 7.500px; letter-spacing: .2px; }
.info { width: 229px; padding-top: 9.500px; }
.p2 .c2 { gap: 12px; }
.tm { font-size: 7.400px; letter-spacing: .2px; }
.p2 .ttl { gap: 20.500px; margin-top: 2px; }
.p2 .ttl b { font-size: 9.800px; letter-spacing: .28px; }
.ttl small { font-size: 7.300px; letter-spacing: .3px; }
.kind { font-size: 7.200px; letter-spacing: .2px; }
.p2 .kind { margin-top: 2px; }
.ld span, .ld em { font-size: 8.400px; letter-spacing: .35px; color: #999; }
.p2 .ld { gap: 9px; margin-top: 5.500px; }
.p2 .etc { gap: 10.500px; padding-left: 22px; margin-top: 6px; }
.p2 .side { display: flex; width: 154px; padding: 20px 0 0 20px; background: #fafafa; }
.p2 .side > div { width: 99px; }
.side p { font-size: 8.300px; letter-spacing: .35px; }
.side .id { color: #999; }
.p2 .id { margin-top: 8px; }

/* Panel 3 */
.p3 .card { width: 541px; height: 392px; }
.p3 .row { position: relative; display: flex; height: 118.500px; padding-left: 36.500px; }
.p3 .row::after { content: ""; position: absolute; left: 17px; right: 0; bottom: 0; height: 1px; background: #dedede; }
.p3 p { display: flex; height: 12px; line-height: 12px; align-items: center; }
.p3 .c-main { width: 208px; padding-top: 19.500px; }
.p3 .second .c-main { padding-top: 19px; }
.p3 .ap { gap: 11.500px; }
.p3 .ttl { display: grid; grid-template-columns: 158px auto; margin-top: 5px; }
.p3 .far { grid-template-columns: 177px auto; }
.p3 .ttl b { font-size: 9.600px; letter-spacing: .3px; color: #2b2945; }
.p3 .ttl b.pink { color: #d94558; font-size: 9.900px; letter-spacing: .4px; font-weight: 500; }
.dotted::before { content: ""; display: inline-block; width: 7px; height: 7px; margin-right: 5px; border-radius: 50%; background: #d94558; }
.p3 .line { margin-top: 10px; margin-left: -1px; }
.p3 .st { display: grid; grid-template-columns: 15px 59.500px 28.500px auto; margin-top: 10px; }
.p3 .st svg { margin-left: -.5px; }
.st svg { color: #888; }
.p3 .lbl { letter-spacing: .85px; }
.p3 .st b, .etc b { font-size: 8.500px; letter-spacing: .15px; color: #2b2945; }
.st em { font-size: 8.500px; letter-spacing: .1px; color: #55536a; }
.st small { font-size: 7.300px; letter-spacing: .2px; }
.c-load { width: 132px; padding: 19.500px 0 0 1px; }
.p3 .c-load svg { margin-left: -1px; }
.p3 .shift { position: relative; left: 2.500px; }
.p3 .ld { gap: 9px; margin-top: 23px; }
.p3 .no { margin-top: 24px; }
.p3 .low { margin-top: 19px; }
.p3 .etc { gap: 10px; padding-left: 22px; margin-top: 6px; }
.p3 .side { display: flex; width: 152px; padding: 20.500px 0 0 19px; background: #fafafa; }
.p3 .side > div { width: 98.500px; }
.p3 .id { margin-top: 7.500px; }
.p3 .tight { height: 101.500px; }
.p3 .tight .c-main, .p3 .tight .c-load { padding-top: 15px; }
.p3 .tight .side { padding-top: 15.500px; }
.p3 .tight .line { margin-top: 4px; }
.p3 .tight .st { margin-top: 8.500px; }
.p3 .last .late { position: absolute; left: 2px; top: -6px; padding-right: 4px; background: #fff; font-size: 9.800px; line-height: 13px; letter-spacing: 1.300px; z-index: 1; }
.frame { position: absolute; z-index: 2; left: 17px; right: 0; top: -7px; height: 120px; border-top: 4px solid #40bdff; border-left: 3px solid #40bdff; }

/* Panel 4 */
.p4 .card { width: 541.500px; height: 332.500px; }
.p4 .row { position: relative; display: flex; padding-left: 22px; border-bottom: 1px solid #e0e0e0; }
.p4 .row:last-child { border: 0; }
.r1 { height: 98.500px; --top: 15px; }
.r2 { height: 123px; --top: 18px; }
.r3 { height: 111px; --top: 19px; }
.p4 p { height: 12px; line-height: 12px; }
.p4 .c-main { width: 228px; padding-top: var(--top); }
.p4 .ttl { display: grid; grid-template-columns: 154px 23.500px auto; }
.p4 .ttl b { font-size: 10.300px; letter-spacing: .28px; color: #2e2c48; }
.p4 .bar { position: relative; width: 177px; height: 9px; margin: 12px 0 0 7px; background: #e1e1e1; }
.r3 .bar { margin-top: 11.500px; }
.p4 .tick { top: -1px; height: 11px; width: 2px; }
.p4 .t1 { left: 0; }
.p4 .t2 { left: 89.500px; }
.p4 .t3 { left: 170.500px; }
.p4 .now { top: 0; height: 9px; }
.times { display: grid; grid-template-columns: 76px 47px; align-items: start; font-size: 7.700px; letter-spacing: .2px; line-height: 12px; padding-top: 5px; }
.r3 .times { padding-top: 4px; }
.times > span { padding-top: 6px; }
.r1 .times > span { padding-top: 5px; }
.eta { display: flex; flex-direction: column; align-items: center; }
.eta small { font-size: 7.600px; margin-top: 1px; }
.eta p { display: flex; gap: 4px; align-items: center; margin-top: 3.500px; padding-right: 16px; }
.eta p b { font-size: 9.200px; color: #2b2945; }
.eta p + small { margin: 5.500px 3px 0 0; }
.field { width: 47px; height: 21px; border: 1px solid #e4e4e4; background: #fafafa; font-size: 9.200px; line-height: 19px; text-align: center; }
.place { width: 138.500px; padding-top: var(--top); font-size: 8.700px; letter-spacing: .33px; }
.place .id, .pair { color: #999; }
.place .id { margin-top: 1px; }
.pair { display: grid; grid-template-columns: 37.500px auto; }
.place .up { margin-top: 16.500px; margin-bottom: 1px; }
.r3 .place .up { margin-top: 15.500px; }
.dock { flex: 1; padding: var(--top) 17.500px 0 26px; background: #fafafa; }
.dock p { display: flex; align-items: center; justify-content: space-between; margin-bottom: 6.300px; font-size: 7px; font-weight: 600; letter-spacing: .88px; color: #a0bccf; }
.dock i { font-size: 8.800px; font-weight: 400; letter-spacing: .25px; color: #999; }
.dock b { font-size: 8.900px; letter-spacing: .1px; color: #2b2945; }
.dock em { font-size: 8.800px; font-weight: 400; letter-spacing: .25px; color: #888; }
.dock .go { justify-content: flex-start; gap: 5px; margin-top: -1px; }
.dock .go b { margin-left: auto; }
.p4 .row > .dot { left: 7px; top: 21px; }

/* Panel 5 */
.p5 .card { width: 541.500px; height: 497px; padding-left: 20px; }
.p5 .row { position: relative; display: grid; grid-template-columns: 193px 113.500px 198px; width: 504.500px; height: 96.800px; }
.p5 .row:first-child { margin-top: -1.500px; }
.p5 .row::after { content: ""; position: absolute; z-index: 1; left: 0; right: 0; bottom: -.5px; height: 1px; background: #dedede; }
.p5 .end::after { display: none; }
.p5 p { display: flex; height: 12px; line-height: 12px; align-items: center; }
.p5 .c-main { padding: 19px 0 0 19.500px; }
.p5 .lbl { letter-spacing: .75px; }
.p5 .ap { display: grid; grid-template-columns: 63px auto; }
.p5 .tm { color: #8c8c8c; }
.p5 .line { margin-top: 11px; }
.p5 .st { display: grid; grid-template-columns: 14.500px 48.500px 48.500px auto; margin-top: 13.500px; }
.p5 .st b { font-size: 8.500px; color: #2b2945; }
.p5 .st small.pink { color: #dd5b6b; }
.p5 .c-load { width: auto; padding: 19px 0 0 1px; }
.p5 .c-load svg { margin-left: -.5px; }
.p5 .ld { gap: 9px; margin-top: 18px; }
.p5 .no { gap: 8px; margin-top: 34.500px; }
.p5 .etc { gap: 10px; padding-left: 22px; margin-top: 4.500px; }
.p5 .side { position: relative; padding: 19.500px 0 0 18px; background: #fafafa; }
.p5 .side p { font-size: 8.200px; letter-spacing: .32px; }
.p5 .nm { justify-content: space-between; padding-right: 19px; }
.p5 .nm small { font-size: 7.300px; }
.p5 .rt { display: grid; grid-template-columns: 52px 14.500px auto; margin-top: 5.300px; }
.p5 .rt u { text-decoration: none; color: #777; font-size: 12px; line-height: 9px; padding-bottom: 3px; }
.p5 .side .id { margin-top: 4px; font-size: 7px; letter-spacing: .3px; }
.p5 .side .tr { gap: 3px; margin-top: 2.400px; font-size: 7.200px; color: #8c8c8c; }
.p5 .side .tr .lbl { letter-spacing: .85px; }
.p5 .side .disc { position: absolute; left: 163px; top: 52px; }
.p5 .side .dot { left: 6px; top: 22px; width: 7px; height: 7px; background: #d94558; }
.is-late::before { content: ""; position: absolute; left: 0; top: 0; bottom: 0; width: 5px; background: #eba9b1; }
.p5 .is-late > .late { position: absolute; z-index: 2; left: 5px; top: -7px; padding: 0 4px 0 5px; background: #fff; font-size: 9px; line-height: 14px; letter-spacing: 1px; color: #d94558; }
.p5 .end { height: 15px; }
```
